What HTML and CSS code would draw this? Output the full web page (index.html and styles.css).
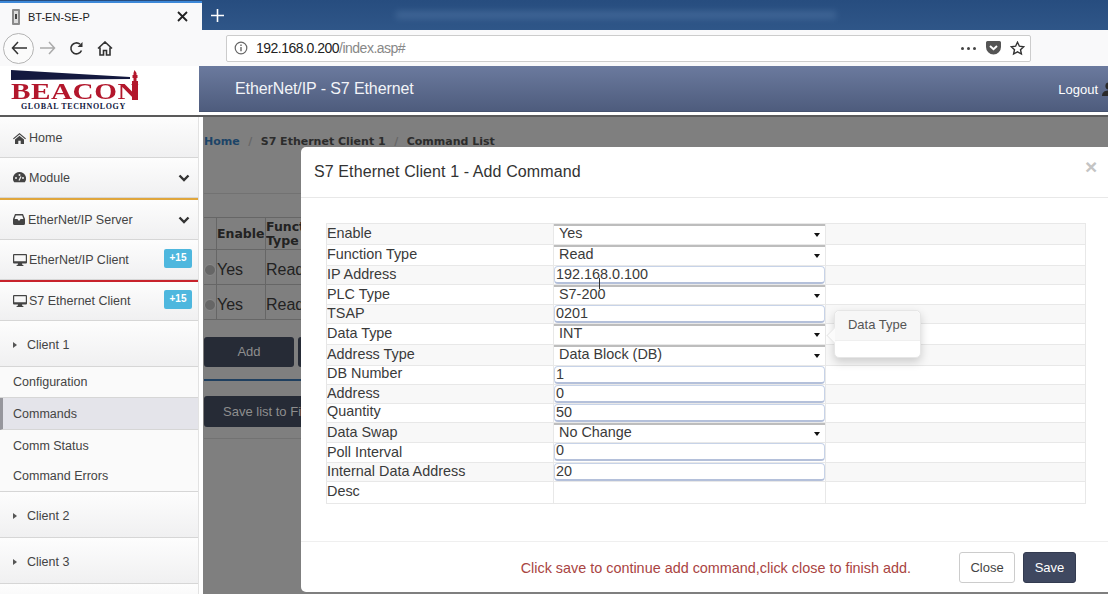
FILE: index.html
```html
<!DOCTYPE html>
<html lang="en">
<head>
<meta charset="UTF-8" />
<title>BT-EN-SE-P</title>
<link rel="stylesheet" href="styles.css">
</head>
<body>

<div class="tabbar">
  <div class="tab">
    <svg class="tab-icon" width="10" height="16" viewBox="0 0 10 16"><rect x="1" y="0" width="8" height="16" rx="1" fill="#8a8a8a"/><rect x="3" y="2" width="4" height="12" fill="#dcdcdc"/><rect x="4" y="5" width="2" height="5" fill="#444"/></svg>
    <span class="tab-title">BT-EN-SE-P</span>
    <svg class="tab-close" width="11" height="11" viewBox="0 0 11 11"><path d="M1 1l9 9M10 1l-9 9" stroke="#222" stroke-width="1.8"/></svg>
  </div>
  <svg class="tab-new" width="13" height="13" viewBox="0 0 13 13"><path d="M6.5 0v13M0 6.5h13" stroke="#fff" stroke-width="1.6"/></svg>
  <div class="tab-blur"></div>
</div>

<div class="toolbar">
  <div class="back-btn">
    <svg width="16" height="14" viewBox="0 0 16 14"><path d="M7 1L1.5 7 7 13M2 7h14" fill="none" stroke="#333" stroke-width="1.5"/></svg>
  </div>
  <svg class="tool-icon" width="16" height="14" viewBox="0 0 16 14"><path d="M9 1l5.5 6L9 13M14 7H0" fill="none" stroke="#aaa" stroke-width="1.5"/></svg>
  <svg class="tool-icon" width="15" height="15" viewBox="0 0 15 15"><path d="M12.5 9.5A5.5 5.5 0 1 1 11 3.2" fill="none" stroke="#333" stroke-width="1.6"/><path d="M13.5 1v5h-5z" fill="#333"/></svg>
  <svg class="tool-icon" width="16" height="15" viewBox="0 0 16 15"><path d="M1 7.5L8 1l7 6.5M3 6.5V14h3.5V9.5h3V14H13V6.5" fill="none" stroke="#333" stroke-width="1.6"/></svg>
  <div class="urlbar">
    <svg width="14" height="14" viewBox="0 0 14 14"><circle cx="7" cy="7" r="5.8" fill="none" stroke="#666" stroke-width="1.2"/><path d="M7 6v4.2M7 3.6v1.4" stroke="#666" stroke-width="1.4"/></svg>
    <span class="url"><b>192.168.0.200</b>/index.asp#</span>
    <span class="url-dots"><i></i><i></i><i></i></span>
    <svg width="15" height="14" viewBox="0 0 15 14"><path d="M1.5 0h12A1.5 1.5 0 0 1 15 1.5V6a7.5 7.5 0 0 1-15 0V1.5A1.5 1.5 0 0 1 1.5 0z" fill="#555"/><path d="M4 5l3.5 3.2L11 5" fill="none" stroke="#fff" stroke-width="2"/></svg>
    <svg width="15" height="15" viewBox="0 0 15 15"><path d="M7.500 1.200l1.900 4 4.300.5-3.200 3 .9 4.300-3.900-2.200-3.900 2.200.9-4.300-3.200-3 4.300-.5z" fill="none" stroke="#333" stroke-width="1.4"/></svg>
  </div>
</div>

<div class="app-header">
  <div class="logo">
    <svg class="logo-bar" width="128" height="34" viewBox="0 0 128 34">
      <path d="M0 0L119 7V9L0 10z" fill="#14193f"/>
      <path d="M123.500 0l2 3v2h1v3h-1v3h1.500v19h-6V11h1.500V8h-1V5h1V3z" fill="#b3172c"/>
    </svg>
    <div class="logo-name">BEACON</div>
    <div class="logo-sub">GLOBAL TECHNOLOGY</div>
  </div>
  <div class="banner">
    <span class="banner-title">EtherNet/IP - S7 Ethernet</span>
    <span class="logout">Logout</span>
    <svg class="user-icon" width="14" height="14" viewBox="0 0 14 14"><circle cx="7" cy="4" r="3.6" fill="#2a2a2a"/><path d="M0 14c0-4 3-5.500 7-5.500s7 1.500 7 5.500z" fill="#2a2a2a"/></svg>
  </div>
</div>
<div class="header-rule"></div>

<div class="app-body">
  <aside class="sidebar">
    <a class="side-item h41 first">
      <svg class="side-icon" width="13" height="11" viewBox="0 0 13 11"><path d="M6.500 0L13 5.500l-.8.8L6.500 1.600.8 6.300 0 5.500zM2 6.500l4.500-3.700L11 6.500V11H7.700V7.700H5.300V11H2z" fill="#444"/></svg>
      Home
    </a>
    <a class="side-item h40">
      <svg class="side-icon" width="13" height="11" viewBox="0 0 13 11"><path d="M6.500 0A6.500 6.500 0 0 0 1.200 10.300h10.600A6.500 6.500 0 0 0 6.500 0z" fill="#444"/><circle cx="3" cy="6" r="1" fill="#eee"/><circle cx="6.500" cy="3" r="1" fill="#eee"/><circle cx="10" cy="6" r="1" fill="#eee"/><path d="M6 8.500l2-4" stroke="#eee" stroke-width="1.300"/></svg>
      Module
      <svg class="chevron" width="12" height="8" viewBox="0 0 12 8"><path d="M1.500 1.500L6 6l4.500-4.500" fill="none" stroke="#333" stroke-width="2.400"/></svg>
    </a>
    <a class="side-item h42 line-orange">
      <svg class="side-icon" width="12" height="11" viewBox="0 0 12 11"><path d="M2 0h8l2 5v4.500A1.500 1.500 0 0 1 10.500 11h-9A1.500 1.500 0 0 1 0 9.500V5zM2.800 1.500L1.600 5h2.900l.8 1.500h1.400L7.500 5h2.900L9.200 1.500z" fill="#444"/></svg>
      EtherNet/IP Server
      <svg class="chevron" width="12" height="8" viewBox="0 0 12 8"><path d="M1.500 1.500L6 6l4.500-4.500" fill="none" stroke="#333" stroke-width="2.400"/></svg>
    </a>
    <a class="side-item h40">
      <svg class="side-icon screen" width="14" height="12" viewBox="0 0 14 12"><path d="M1 0h12a1 1 0 0 1 1 1v7.500a1 1 0 0 1-1 1H9l.4 1.500h1v1H3.600v-1h1L5 9.500H1a1 1 0 0 1-1-1V1a1 1 0 0 1 1-1zm.2 1.200v6h11.600v-6z" fill="#444"/></svg>
      EtherNet/IP Client
      <span class="badge">+15</span>
    </a>
    <a class="side-item h41 line-red">
      <svg class="side-icon screen" width="14" height="12" viewBox="0 0 14 12"><path d="M1 0h12a1 1 0 0 1 1 1v7.500a1 1 0 0 1-1 1H9l.4 1.500h1v1H3.600v-1h1L5 9.500H1a1 1 0 0 1-1-1V1a1 1 0 0 1 1-1zm.2 1.200v6h11.600v-6z" fill="#444"/></svg>
      S7 Ethernet Client
      <span class="badge">+15</span>
    </a>
    <a class="side-item h46 sub-head"><span class="caret"></span>Client 1</a>
    <a class="side-link h31">Configuration</a>
    <a class="side-link h32 current">Commands</a>
    <a class="side-link h31 no-line">Comm Status</a>
    <a class="side-link h31">Command Errors</a>
    <a class="side-item h46 sub-head"><span class="caret"></span>Client 2</a>
    <a class="side-item h46 sub-head"><span class="caret"></span>Client 3</a>
    <a class="side-item h46 sub-head"></a>
  </aside>

  <main class="content">
    <div class="crumbs"><span class="crumb-home">Home</span><i>/</i>S7 Ethernet Client 1<i>/</i>Command List</div>
    <div class="page-rule"></div>
    <table class="bg-table">
      <tr class="bg-head"><th></th><th>Enable</th><th>Function Type</th></tr>
      <tr><td><span class="radio"></span></td><td>Yes</td><td>Read</td></tr>
      <tr><td><span class="radio"></span></td><td>Yes</td><td>Read</td></tr>
    </table>
    <div class="bg-btns"><span class="bg-btn add">Add</span><span class="bg-btn add-next"></span></div>
    <div class="blue-rule"></div>
    <span class="bg-btn save-list">Save list to File</span>
    <div class="page-rule last"></div>

    <section class="modal">
      <header class="modal-head">
        <h2>S7 Ethernet Client 1 - Add Command</h2>
        <span class="modal-x">×</span>
      </header>
      <div class="modal-body">
        <table class="form-table">
          <tr class="odd"><td>Enable</td><td class="sel"><div class="sel-box">Yes</div></td><td></td></tr>
          <tr><td>Function Type</td><td class="sel"><div class="sel-box">Read</div></td><td></td></tr>
          <tr class="odd short"><td>IP Address</td><td><input class="field" value="192.168.0.100"></td><td></td></tr>
          <tr class="mid"><td>PLC Type</td><td class="sel"><div class="sel-box">S7-200</div></td><td></td></tr>
          <tr class="odd short"><td>TSAP</td><td><input class="field" value="0201"></td><td></td></tr>
          <tr><td>Data Type</td><td class="sel"><div class="sel-box">INT</div></td><td></td></tr>
          <tr class="odd"><td>Address Type</td><td class="sel"><div class="sel-box">Data Block (DB)</div></td><td></td></tr>
          <tr class="short"><td>DB Number</td><td><input class="field" value="1"></td><td></td></tr>
          <tr class="odd short"><td>Address</td><td><input class="field" value="0"></td><td></td></tr>
          <tr class="short"><td>Quantity</td><td><input class="field" value="50"></td><td></td></tr>
          <tr class="odd mid"><td>Data Swap</td><td class="sel"><div class="sel-box">No Change</div></td><td></td></tr>
          <tr class="mid"><td>Poll Interval</td><td><input class="field" value="0"></td><td></td></tr>
          <tr class="odd short"><td>Internal Data Address</td><td><input class="field" value="20"></td><td></td></tr>
          <tr class="tall"><td>Desc</td><td></td><td></td></tr>
        </table>
      </div>
      <footer class="modal-foot">
        <span class="foot-note">Click save to continue add command,click close to finish add.</span>
        <button class="btn btn-close">Close</button>
        <button class="btn btn-save">Save</button>
      </footer>
    </section>

    <div class="popover">
      <div class="pop-title">Data Type</div>
    </div>
    <svg class="ibeam" width="5" height="11" viewBox="0 0 5 11"><path d="M2.500 0v11" stroke="#333" stroke-width="1"/></svg>
  </main>
</div>

</body>
</html>
```

FILE: styles.css
```css
html, body {
  margin: 0;
  height: 594px;
  overflow: hidden;
}
body {
  font-family: "Liberation Sans", Arial, sans-serif;
  background: #fff;
  color: #333;
  display: flex;
  flex-direction: column;
}

/* browser chrome */
.tabbar {
  height: 30px;
  background: linear-gradient(#274d7f, #2f5688);
  display: flex;
  align-items: center;
  position: relative;
  flex: none;
}
.tab {
  width: 202px;
  height: 27px;
  margin-top: 3px;
  background: #f9f9fa;
  box-shadow: 0 -2px 0 #3d88d8;
  display: flex;
  align-items: center;
  padding: 0 14px 0 11px;
  box-sizing: border-box;
}
.tab-title {
  font-size: 11px;
  color: #222;
  margin-left: 7px;
  flex: 1;
}
.tab-new {
  margin-left: 9px;
}
.tab-blur {
  position: absolute;
  left: 396px;
  top: 11px;
  width: 440px;
  height: 8px;
  background: #5b80ad;
  opacity: .4;
  filter: blur(3px);
}
.toolbar {
  height: 36px;
  background: #f9f9fa;
  display: flex;
  align-items: center;
  padding-left: 3px;
  flex: none;
}
.back-btn {
  width: 29px;
  height: 29px;
  border: 1px solid #b4b4b4;
  border-radius: 50%;
  background: #fbfbfb;
  display: flex;
  align-items: center;
  justify-content: center;
  margin-right: 6px;
}
.tool-icon {
  margin-right: 13px;
}
.toolbar .tool-icon:nth-child(4) {
  margin-right: 113px;
}
.urlbar {
  width: 805px;
  height: 27px;
  background: #fff;
  border: 1px solid #ccc;
  border-radius: 2px;
  box-sizing: border-box;
  display: flex;
  align-items: center;
  padding: 0 5px 0 7px;
  gap: 9px;
}
.url {
  font-size: 14px;
  color: #888;
  flex: 1;
  margin-left: -1px;
  letter-spacing: -.5px;
}
.url b {
  font-weight: normal;
  color: #222;
}
.url-dots {
  display: flex;
  gap: 3px;
  margin-right: 1px;
}
.url-dots i {
  width: 3px;
  height: 3px;
  border-radius: 50%;
  background: #444;
}

/* app header */
.app-header {
  height: 46px;
  display: flex;
  flex: none;
}
.logo {
  width: 199px;
  flex: none;
  position: relative;
  background: #fff;
}
.logo-bar {
  position: absolute;
  left: 11px;
  top: 4px;
}
.logo-name {
  position: absolute;
  left: 11px;
  top: 18px;
  font: bold 23px/15px "Liberation Serif", serif;
  color: #b3172c;
  letter-spacing: .4px;
  transform: scaleX(1.27);
  transform-origin: left;
}
.logo-sub {
  position: absolute;
  left: 21px;
  top: 37px;
  font: bold 8px/8px "Liberation Serif", serif;
  color: #14193f;
  letter-spacing: .65px;
}
.banner {
  flex: 1;
  background: linear-gradient(#6b7a9e, #4e5c7d);
  border-bottom: 1px solid #46536f;
  box-sizing: border-box;
  display: flex;
  align-items: center;
  padding: 1px 0 0 36px;
  color: #f2f4f8;
}
.banner-title {
  font-size: 16px;
  letter-spacing: -.1px;
  flex: 1;
}
.logout {
  font-size: 13px;
  color: #fff;
}
.user-icon {
  margin: 0 -8px 0 4px;
}
.header-rule {
  height: 2px;
  margin-top: 3px;
  background: #5a5a5a;
  flex: none;
}

/* sidebar */
.app-body {
  flex: 1;
  display: flex;
  min-height: 0;
}
.sidebar {
  width: 198px;
  flex: none;
  margin-right: 5px;
  box-shadow: 1px 0 0 #e2e2e2;
  overflow: hidden;
}
.side-item, .side-link {
  display: flex;
  align-items: center;
  box-sizing: border-box;
  font-size: 12.5px;
  color: #444;
  padding-left: 13px;
  border-bottom: 1px solid #d6d6d6;
  background: linear-gradient(#fdfdfd, #f0f0f1);
}
.side-item.first {
  padding-top: 2px;
}
.side-link {
  background: #fafafa;
  padding-bottom: 1px;
}
.side-link.no-line {
  border-bottom: 0;
  padding-bottom: 0;
}
.side-link.current {
  background: #e4e4ea;
  border-left: 3px solid #96969c;
  padding-left: 10px;
  padding-bottom: 0;
}
.h40 { height: 40px; }
.h41 { height: 41px; }
.h42 { height: 42px; }
.h46 { height: 46px; }
.h31 { height: 31px; }
.h32 { height: 32px; }
.line-orange { border-top: 2px solid #e0a63c; }
.line-red { border-top: 2px solid #c8232c; }
.side-icon {
  margin-right: 3px;
  flex: none;
}
.side-icon.screen {
  margin-right: 2px;
}
.chevron {
  margin-left: auto;
  margin-right: 8px;
}
.badge {
  margin: -3px 6px 0 auto;
  width: 28px;
  height: 19px;
  background: #4eb7de;
  border-radius: 2px;
  color: #fff;
  font-size: 10px;
  font-weight: bold;
  text-align: center;
  line-height: 18px;
}
.sub-head {
  padding-top: 2px;
}
.caret {
  width: 0;
  height: 0;
  border-left: 4px solid #555;
  border-top: 3.5px solid transparent;
  border-bottom: 3.5px solid transparent;
  margin-right: 10px;
}

/* dimmed page behind the dialog */
.content {
  flex: 1;
  background: #7f7f7f;
  position: relative;
  overflow: hidden;
  padding-left: 1px;
}
.crumbs {
  font: bold 11px/14px "DejaVu Sans", sans-serif;
  color: #2c2c2c;
  margin-top: 18px;
}
.crumb-home {
  color: #1c4467;
}
.crumbs i {
  font-style: normal;
  color: #666;
  margin: 0 8.5px;
}
.page-rule {
  height: 1px;
  background: #727272;
  margin-top: 44px;
}
.bg-table {
  border-collapse: collapse;
  table-layout: fixed;
  width: 96px;
  margin-top: 23px;
  font-size: 16px;
  color: #222;
}
.bg-table td, .bg-table th {
  border: 1px solid #666;
  padding: 5px 0 0;
  text-align: left;
  height: 29px;
  overflow: hidden;
}
.bg-table th {
  font: bold 12.5px/14px "DejaVu Sans", sans-serif;
  height: 31px;
  padding: 0;
  vertical-align: middle;
}
.bg-table th:first-child, .bg-table td:first-child {
  width: 12px;
  border-left: 0;
}
.bg-table th:nth-child(2), .bg-table td:nth-child(2) {
  width: 48px;
}
.bg-table th:nth-child(3), .bg-table td:nth-child(3) {
  width: 36px;
  border-right: 0;
}
.radio {
  display: block;
  width: 10px;
  height: 10px;
  border-radius: 50%;
  background: #666;
  border: 1px solid #8a8a8a;
}
.bg-btns {
  display: flex;
  gap: 4px;
  margin-top: 17px;
}
.bg-btn {
  display: block;
  background: #262b36;
  color: #8e8e8e;
  border-radius: 3px;
  font-size: 13px;
  white-space: nowrap;
  overflow: hidden;
}
.add {
  width: 90px;
  height: 30px;
  line-height: 30px;
  text-align: center;
}
.add-next {
  width: 3px;
  height: 30px;
  border-radius: 3px 0 0 3px;
}
.blue-rule {
  height: 2px;
  background: #1f3f5f;
  margin-top: 12px;
}
.save-list {
  width: 78px;
  height: 31px;
  line-height: 31px;
  margin-top: 15px;
  padding-left: 19px;
  border-radius: 3px 0 0 3px;
}
.page-rule.last {
  margin-top: 11px;
}

/* dialog */
.modal {
  position: absolute;
  left: 98px;
  top: 30px;
  width: 820px;
  height: 445px;
  background: #fff;
  border-radius: 5px;
  display: flex;
  flex-direction: column;
}
.modal-head {
  height: 50px;
  border-bottom: 1px solid #e8e8e8;
  display: flex;
  align-items: center;
  padding-left: 13px;
  flex: none;
  position: relative;
}
.modal-head h2 {
  margin: 0;
  font-size: 16px;
  font-weight: normal;
  color: #333;
  letter-spacing: .1px;
}
.modal-x {
  position: absolute;
  left: 784px;
  top: 8px;
  font-size: 21px;
  font-weight: bold;
  color: #c4c4c4;
}
.modal-body {
  flex: 1;
  padding: 25px 0 0 25px;
}
.form-table {
  width: 760px;
  border-collapse: collapse;
  table-layout: fixed;
  font-size: 14.4px;
  color: #3a3a3a;
  border: 1px solid #e6e6e6;
}
.form-table td {
  padding: 0;
  height: 20px;
  border: 1px solid #e8e8e8;
  border-width: 1px 1px 1px 0;
  line-height: 19px;
  vertical-align: top;
  overflow: hidden;
}
.form-table td:first-child {
  width: 227px;
  box-sizing: border-box;
}
.form-table td:nth-child(2) {
  width: 271px;
  border-left: 1px solid #e0e0e0;
}
.form-table tr.short td { height: 18px; line-height: 15px; }
.form-table tr.odd.short td { line-height: 16px; }
.form-table tr.mid td { height: 19px; }
.form-table tr.tall td { height: 21px; }
.form-table tr.odd td { background: #f8f8f8; }
.form-table tr.odd td:nth-child(2) { background: #fff; }
.form-table td .sel-box {
  height: 20px;
  box-sizing: border-box;
  border-top: 2px solid #bdbdbd;
  background: #fff;
  padding-left: 5px;
  line-height: 15px;
  position: relative;
}
.form-table .mid .sel-box {
  height: 19px;
}
.sel-box::after {
  content: "";
  position: absolute;
  right: 5px;
  top: 7px;
  border-top: 4px solid #111;
  border-left: 3.5px solid transparent;
  border-right: 3.5px solid transparent;
}
.field {
  display: block;
  width: 100%;
  height: 18px;
  box-sizing: border-box;
  padding: 0 1px 2px;
  border: 1px solid #c7d3e8;
  border-bottom: 2px solid #b4c0da;
  border-radius: 4px;
  font: inherit;
  color: #3a3a3a;
  background: #fff;
}
.modal-foot {
  height: 50px;
  border-top: 1px solid #efefef;
  display: flex;
  align-items: center;
  justify-content: flex-end;
  padding-right: 45px;
  flex: none;
}
.foot-note {
  font-size: 14.4px;
  color: #a94442;
  margin-right: 48px;
  margin-top: 1px;
}
.btn {
  height: 31px;
  border-radius: 3px;
  font: 13px "Liberation Sans", sans-serif;
  padding: 0;
}
.btn-close {
  width: 56px;
  background: #fff;
  color: #444;
  border: 1px solid #ccc;
  margin-right: 8px;
}
.btn-save {
  width: 53px;
  background: #3f4860;
  color: #fff;
  border: 1px solid #333b50;
}

/* tooltip next to Data Type */
.popover {
  position: absolute;
  left: 631px;
  top: 193px;
  width: 87px;
  height: 48px;
  background: #fff;
  border: 1px solid #e6e6e6;
  border-radius: 5px;
  box-shadow: 0 4px 10px rgba(0, 0, 0, .18);
  box-sizing: border-box;
}
.popover::before {
  content: "";
  position: absolute;
  left: -8px;
  top: 17px;
  width: 14px;
  height: 14px;
  background: #fbfbfb;
  transform: rotate(45deg) scale(.75);
  border-left: 1px solid #e4e4e4;
  border-bottom: 1px solid #e4e4e4;
}
.pop-title {
  height: 29px;
  background: #f7f7f7;
  border-bottom: 1px solid #efefef;
  border-radius: 5px 5px 0 0;
  font-size: 13px;
  line-height: 27px;
  text-align: center;
  color: #555;
  position: relative;
}
.ibeam {
  position: absolute;
  left: 394px;
  top: 161px;
}
```
